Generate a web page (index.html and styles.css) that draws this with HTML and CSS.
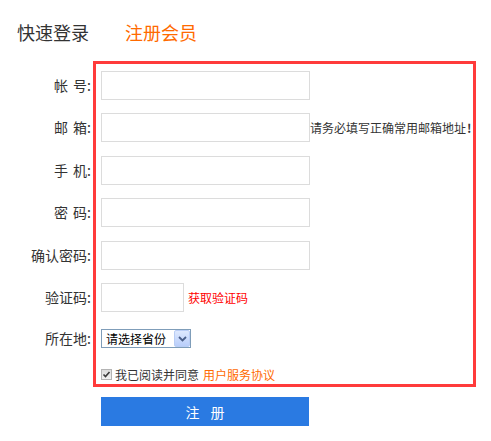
FILE: index.html
```html
<!DOCTYPE html>
<html lang="zh-CN">
<head>
<meta charset="utf-8">
<title>注册会员</title>
<link rel="stylesheet" href="styles.css">
</head>
<body>
<div class="page">
  <div class="tabs">
    <span class="tab">快速登录</span>
    <span class="tab tab-active">注册会员</span>
  </div>
  <div class="form">
    <div class="labels">
      <div class="label">帐 号:</div>
      <div class="label">邮 箱:</div>
      <div class="label">手 机:</div>
      <div class="label">密 码:</div>
      <div class="label">确认密码:</div>
      <div class="label">验证码:</div>
      <div class="label label-select">所在地:</div>
    </div>
    <div class="panel">
      <div class="row"><input class="field" type="text"></div>
      <div class="row"><input class="field" type="text"><span class="hint">请务必填写正确常用邮箱地址<b class="bang">!</b></span></div>
      <div class="row"><input class="field" type="text"></div>
      <div class="row"><input class="field" type="password"></div>
      <div class="row"><input class="field" type="password"></div>
      <div class="row"><input class="field field-code" type="text"><a class="get-code" href="#">获取验证码</a></div>
      <div class="row row-select">
        <div class="select">
          <span class="select-text">请选择省份</span>
          <span class="select-btn"><svg width="9" height="6" viewBox="0 0 9 6"><path d="M1 1 L4.5 4.5 L8 1" fill="none" stroke="#4a5f8a" stroke-width="1.8"/></svg></span>
        </div>
      </div>
      <div class="row row-agree">
        <span class="check"><svg width="9" height="9" viewBox="0 0 9 9"><path d="M1.5 4.5 L3.5 6.5 L7.5 2" fill="none" stroke="#3a3a3a" stroke-width="1.6"/></svg></span>
        <span class="agree">我已阅读并同意</span><a class="protocol" href="#">用户服务协议</a>
      </div>
    </div>
  </div>
  <div class="actions">
    <button class="submit" type="button">注 册</button>
  </div>
</div>
</body>
</html>
```

FILE: styles.css
```css
html, body {
  margin: 0;
  padding: 0;
  background: #fff;
}
body {
  font-family: "Noto Sans CJK SC", "Liberation Sans", sans-serif;
  color: #333;
}
.page {
  width: 491px;
}
.tabs {
  box-sizing: border-box;
  height: 61px;
  padding: 20px 0 0 17px;
  font-size: 18px;
  line-height: 24px;
  display: flex;
  gap: 36px;
}
.tab {
  color: #333;
}
.tab-active {
  color: #ff6a00;
}
.form {
  display: flex;
}
.labels {
  box-sizing: border-box;
  width: 93px;
  padding: 10px 2px 0 0;
  display: flex;
  flex-direction: column;
  gap: 13.4px;
}
.label {
  height: 29px;
  line-height: 29px;
  text-align: right;
  font-size: 14px;
  color: #333;
  white-space: nowrap;
  word-spacing: 2px;
}
.label-select {
  height: 27px;
  line-height: 27px;
}
.panel {
  box-sizing: border-box;
  width: 383px;
  height: 326px;
  border: 3px solid #ff3b3b;
  padding: 7px 0 0 5px;
  display: flex;
  flex-direction: column;
  gap: 13.4px;
}
.row {
  height: 29px;
  display: flex;
  align-items: center;
  white-space: nowrap;
}
.field {
  box-sizing: border-box;
  width: 209px;
  height: 29px;
  margin: 0;
  padding: 0 4px;
  border: 1px solid #dcdcdc;
  outline: none;
  font-size: 12px;
  font-family: inherit;
}
.field-code {
  width: 83px;
}
.hint {
  font-size: 12px;
  color: #333;
}
.bang {
  font-weight: bold;
  margin-left: 1px;
}
.get-code {
  margin-left: 4px;
  font-size: 12px;
  color: #f00;
  text-decoration: none;
}
.row-select {
  height: 27px;
}
.select {
  box-sizing: border-box;
  width: 90px;
  height: 19px;
  border: 1px solid #7f9db9;
  display: flex;
  align-items: center;
  justify-content: space-between;
  padding: 0 0 0 4px;
  background: #fff;
}
.select-text {
  font-size: 12px;
  line-height: 17px;
  color: #000;
}
.select-btn {
  box-sizing: border-box;
  width: 16px;
  height: 17px;
  border: 1px solid #b9cdf5;
  border-radius: 2px;
  background: linear-gradient(#dde8fe, #b9cefa);
  display: flex;
  align-items: center;
  justify-content: center;
}
.row-agree {
  height: 18px;
  font-size: 12px;
}
.check {
  box-sizing: border-box;
  width: 11px;
  height: 11px;
  border: 1px solid #b4b4b4;
  background: linear-gradient(#dcdcdc, #f2f2f2);
  display: flex;
  align-items: center;
  justify-content: center;
  margin-right: 3px;
}
.agree {
  color: #333;
}
.protocol {
  margin-left: 4px;
  color: #ff6a00;
  text-decoration: none;
}
.actions {
  padding: 10px 0 0 101px;
}
.submit {
  display: block;
  width: 208px;
  height: 29px;
  margin: 0;
  border: 0;
  padding: 0;
  background: #2a7ae2;
  color: #fff;
  font-family: inherit;
  font-size: 14px;
  word-spacing: 8px;
  cursor: pointer;
}
```
